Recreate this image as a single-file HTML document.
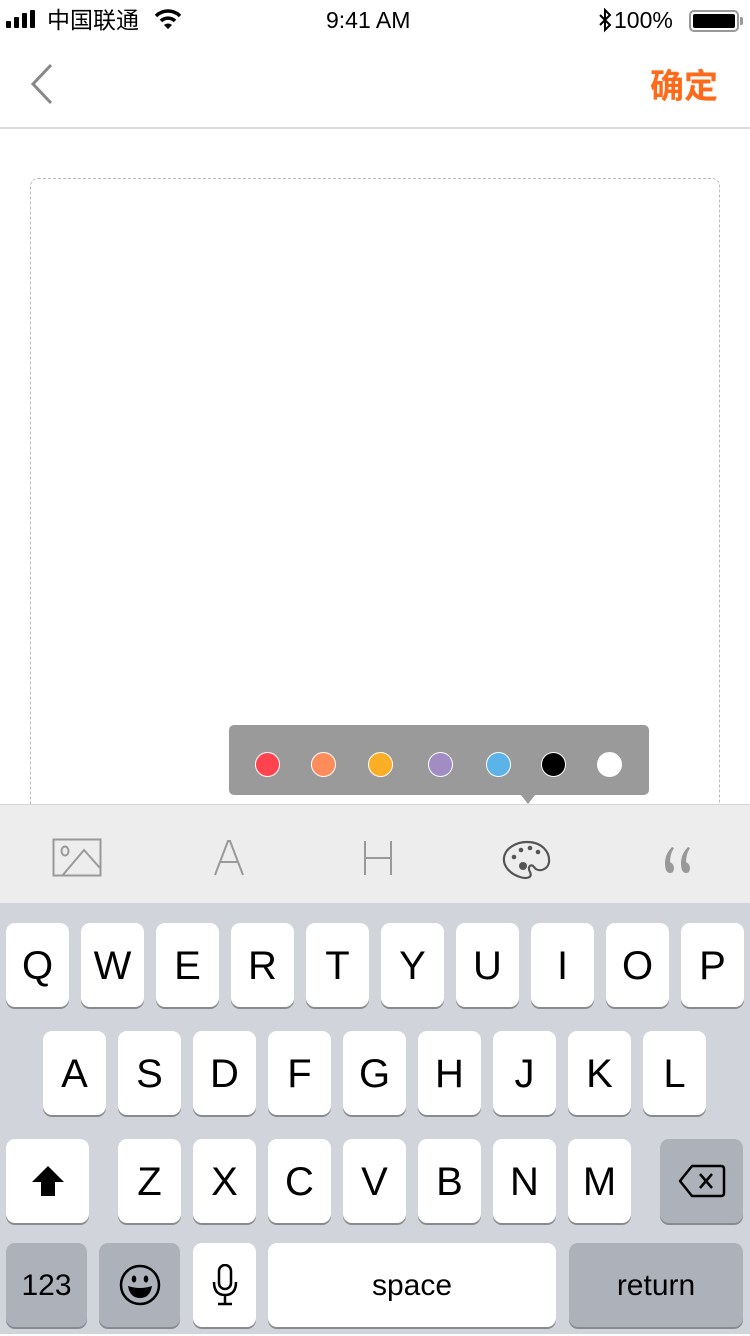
<!DOCTYPE html>
<html><head><meta charset="utf-8"><style>
*{margin:0;padding:0;box-sizing:border-box}
body{width:750px;height:1334px;position:relative;background:#fff;font-family:"Liberation Sans","Noto Sans CJK SC",sans-serif;overflow:hidden}
.a{position:absolute}
.k{position:absolute;width:63px;height:84px;background:#fff;border-radius:9px;box-shadow:0 2px 0 #898a8d;font-size:40px;text-align:center;line-height:86px;color:#000}
.g{background:#acb1ba}
.dot{position:absolute;top:752px;width:25px;height:25px;border-radius:50%;border:1.5px solid #fff}
</style></head><body>
<!-- status bar -->
<div class="a" style="left:6px;top:10px;">
<div class="a" style="left:0;top:11px;width:5px;height:7px;background:#000;border-radius:1px"></div>
<div class="a" style="left:8px;top:7px;width:5px;height:11px;background:#000;border-radius:1px"></div>
<div class="a" style="left:16px;top:3px;width:5px;height:15px;background:#000;border-radius:1px"></div>
<div class="a" style="left:24px;top:0;width:5px;height:18px;background:#000;border-radius:1px"></div>
</div>
<div class="a" style="left:47px;top:5px;font-size:23px;color:#000;line-height:30px">中国联通</div>
<svg class="a" style="left:154px;top:8px" width="28" height="22" viewBox="0 0 28 22"><path d="M2 8 A17 17 0 0 1 26 8" stroke="#000" stroke-width="3.5" fill="none"/><path d="M7 13 A10 10 0 0 1 21 13" stroke="#000" stroke-width="3.5" fill="none"/><path d="M10 17 L14 21 L18 17 A6 6 0 0 0 10 17Z" fill="#000"/></svg>
<div class="a" style="left:326px;top:5px;font-size:23px;color:#000;line-height:30px">9:41 AM</div>
<svg class="a" style="left:597px;top:8px" width="16" height="26" viewBox="0 0 16 26"><path d="M3 7 L13 17 L8 22 L8 2 L13 7 L3 17" stroke="#000" stroke-width="2" fill="none"/></svg>
<div class="a" style="left:614px;top:5px;font-size:23px;color:#000;line-height:30px">100%</div>
<div class="a" style="left:689px;top:10px;width:50px;height:22px;border:2px solid #999;border-radius:5px;padding:2px"><div style="width:100%;height:100%;background:#000;border-radius:2px"></div></div>
<div class="a" style="left:740px;top:17px;width:3px;height:8px;background:#999;border-radius:0 2px 2px 0"></div>
<!-- nav -->
<svg class="a" style="left:28px;top:62px" width="28" height="44" viewBox="0 0 28 44"><path d="M23 3 L5 22 L23 41" stroke="#888" stroke-width="3" fill="none"/></svg>
<div class="a" style="left:650px;top:64px;font-size:34px;color:#ff6a1a;line-height:46px;font-weight:bold">确定</div>
<div class="a" style="left:0;top:127px;width:750px;height:2px;background:#dcdcdc"></div>
<!-- editor box -->
<div class="a" style="left:30px;top:178px;width:690px;height:1100px;border:1px dashed #bbb;border-radius:8px"></div>
<!-- popover -->
<div class="a" style="left:229px;top:725px;width:420px;height:70px;background:#9a9a9a;border-radius:5px"></div>
<div class="a" style="left:521px;top:795px;width:0;height:0;border-left:7px solid transparent;border-right:7px solid transparent;border-top:9px solid #9a9a9a"></div>
<div class="dot" style="left:255px;background:#ff4450"></div>
<div class="dot" style="left:311px;background:#ff8c5a"></div>
<div class="dot" style="left:368px;background:#fcae25"></div>
<div class="dot" style="left:428px;background:#a28cc4"></div>
<div class="dot" style="left:486px;background:#5cb3e8"></div>
<div class="dot" style="left:541px;background:#000"></div>
<div class="dot" style="left:597px;background:#fff"></div>
<!-- toolbar -->
<div class="a" style="left:0;top:804px;width:750px;height:100px;background:#ededed;border-top:1px solid #d6d6d6"></div>
<svg class="a" style="left:52px;top:838px" width="50" height="40" viewBox="0 0 50 40"><rect x="1.5" y="1.5" width="47" height="36" fill="none" stroke="#999" stroke-width="2"/><ellipse cx="13" cy="13" rx="3.5" ry="4.5" fill="none" stroke="#999" stroke-width="2"/><path d="M10 38 L32 12 L48 30" fill="none" stroke="#999" stroke-width="2"/></svg>
<svg class="a" style="left:212px;top:840px" width="34" height="36" viewBox="0 0 34 36"><path d="M3 35 L16 1 L18 1 L31 35 M8 22 L26 22" fill="none" stroke="#999" stroke-width="2"/></svg>
<svg class="a" style="left:362px;top:840px" width="32" height="36" viewBox="0 0 32 36"><path d="M3 1 V35 M29 1 V35 M3 18 H29" fill="none" stroke="#999" stroke-width="2"/></svg>
<svg class="a" style="left:502px;top:840px" width="50" height="40" viewBox="0 0 50 40"><path d="M25 2 C40 2 48 12 47 22 C46 30 36 33 32 27 C29 23 25 27 28 32 C31 38 24 39 18 37 C8 34 1 26 2 18 C3 9 13 2 25 2Z" fill="none" stroke="#555" stroke-width="2.2"/><circle cx="12" cy="17" r="2.3" fill="#555"/><circle cx="19" cy="10" r="2.3" fill="#555"/><circle cx="28" cy="8" r="2.3" fill="#555"/><circle cx="36" cy="12" r="2.3" fill="#555"/><circle cx="21" cy="26" r="4" fill="#555"/></svg>
<svg class="a" style="left:663px;top:846px" width="32" height="28" viewBox="0 0 32 28"><path d="M9 1 Q2 8 2 17 Q2 27 7 27 Q11 27 11 22 Q11 18 7 16 Q7 8 11 2Z M25 1 Q18 8 18 17 Q18 27 23 27 Q27 27 27 22 Q27 18 23 16 Q23 8 27 2Z" fill="#999"/></svg>
<!-- keyboard -->
<div class="a" style="left:0;top:903px;width:750px;height:431px;background:#d1d5db"></div>
<div class="k" style="left:6px;top:923px">Q</div>
<div class="k" style="left:81px;top:923px">W</div>
<div class="k" style="left:156px;top:923px">E</div>
<div class="k" style="left:231px;top:923px">R</div>
<div class="k" style="left:306px;top:923px">T</div>
<div class="k" style="left:381px;top:923px">Y</div>
<div class="k" style="left:456px;top:923px">U</div>
<div class="k" style="left:531px;top:923px">I</div>
<div class="k" style="left:606px;top:923px">O</div>
<div class="k" style="left:681px;top:923px">P</div>
<div class="k" style="left:43px;top:1031px">A</div>
<div class="k" style="left:118px;top:1031px">S</div>
<div class="k" style="left:193px;top:1031px">D</div>
<div class="k" style="left:268px;top:1031px">F</div>
<div class="k" style="left:343px;top:1031px">G</div>
<div class="k" style="left:418px;top:1031px">H</div>
<div class="k" style="left:493px;top:1031px">J</div>
<div class="k" style="left:568px;top:1031px">K</div>
<div class="k" style="left:643px;top:1031px">L</div>
<div class="k" style="left:6px;top:1139px;width:83px"><svg width="40" height="36" viewBox="0 0 40 36" style="margin-top:24px"><path d="M20 3 L36 19 L27 19 L27 33 L13 33 L13 19 L4 19Z" fill="#000"/></svg></div>
<div class="k" style="left:118px;top:1139px">Z</div>
<div class="k" style="left:193px;top:1139px">X</div>
<div class="k" style="left:268px;top:1139px">C</div>
<div class="k" style="left:343px;top:1139px">V</div>
<div class="k" style="left:418px;top:1139px">B</div>
<div class="k" style="left:493px;top:1139px">N</div>
<div class="k" style="left:568px;top:1139px">M</div>
<div class="k g" style="left:660px;top:1139px;width:83px"><svg width="48" height="34" viewBox="0 0 48 34" style="margin-top:25px"><path d="M14 2 H43 Q46 2 46 5 V29 Q46 32 43 32 H14 L2 17Z" fill="none" stroke="#000" stroke-width="2.5" stroke-linejoin="round"/><path d="M22 10 L34 24 M34 10 L22 24" stroke="#000" stroke-width="2.5"/></svg></div>
<div class="k g" style="left:6px;top:1243px;width:81px;font-size:30px">123</div>
<div class="k g" style="left:99px;top:1243px;width:81px"><svg width="42" height="42" viewBox="0 0 42 42" style="margin-top:21px"><circle cx="21" cy="21" r="19" fill="none" stroke="#000" stroke-width="2.5"/><ellipse cx="15" cy="15" rx="2.3" ry="3.5"/><ellipse cx="27" cy="15" rx="2.3" ry="3.5"/><path d="M9 22 Q21 26 33 22 Q31 34 21 34 Q11 34 9 22Z" fill="#000"/></svg></div>
<div class="k" style="left:193px;top:1243px"><svg width="26" height="42" viewBox="0 0 26 42" style="margin-top:21px"><rect x="7" y="1" width="12" height="24" rx="6" fill="none" stroke="#000" stroke-width="2.5"/><path d="M2 18 Q2 31 13 31 Q24 31 24 18 M13 31 V40 M6 40 H20" fill="none" stroke="#000" stroke-width="2.5"/></svg></div>
<div class="k" style="left:268px;top:1243px;width:288px;font-size:30px">space</div>
<div class="k g" style="left:569px;top:1243px;width:174px;font-size:30px">return</div>
</body></html>
